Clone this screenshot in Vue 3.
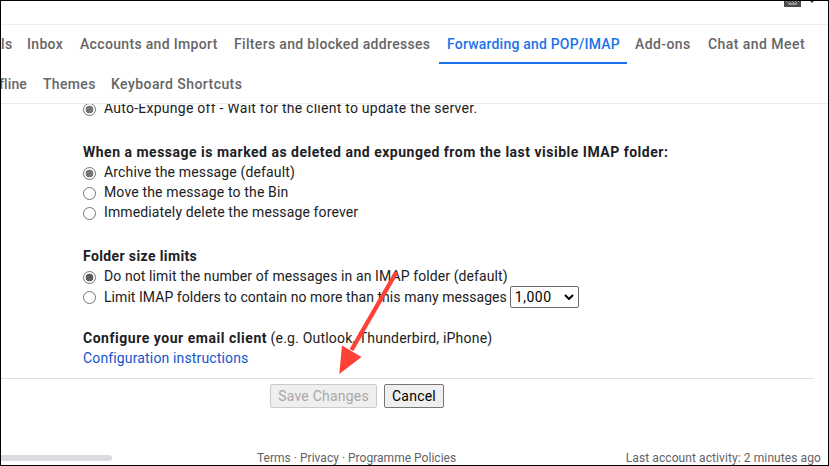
<template>
  <div class="page">
    <header class="toolbar">
      <svg class="keyboard" viewBox="0 0 17 6" width="17" height="6">
        <path d="M0 0h17v6H0z" fill="#4a4a4a" />
        <path d="M2 0h1v1H2zM5 0h1v1H5zM8 0h1v1H8zM11 0h1v1h-1zM14 0h1v1h-1zM3 1h1v1H3zM6 1h1v1H6zM9 1h1v1H9zM12 1h1v1h-1z" fill="#aaa" />
        <path d="M4 2.500h9v1H4z" fill="#ddd" />
      </svg>
      <svg class="caret" viewBox="0 0 4 2" width="4" height="2">
        <path d="M0 0h4L2 2z" fill="#444" />
      </svg>
    </header>

    <nav class="tabs">
      <div class="tab-row">
        <a v-for="tab in firstRow" :key="tab.id" class="tab" :class="[tab.id, { active: tab.id === activeTab }]" @click="activeTab = tab.id">{{ tab.label }}</a>
      </div>
      <div class="tab-row second">
        <a v-for="tab in secondRow" :key="tab.id" class="tab" :class="[tab.id, { active: tab.id === activeTab }]" @click="activeTab = tab.id">{{ tab.label }}</a>
      </div>
    </nav>

    <main class="settings">
      <section class="group expunge-mode">
        <label class="option"><input type="radio" checked disabled /><span class="t-wait">Auto-Expunge off - Wait for the client to update the server.</span></label>
      </section>

      <section class="group">
        <h3><span class="t-when">When a message is marked as deleted and expunged from the last visible IMAP folder:</span></h3>
        <label v-for="option in expungeOptions" :key="option.id" class="option">
          <input v-model="expungeAction" type="radio" name="expunge" :value="option.id" :class="{ muted: option.id === 'archive' }" /><span :class="'t-' + option.id">{{ option.label }}</span>
        </label>
      </section>

      <section class="group">
        <h3><span class="t-folder">Folder size limits</span></h3>
        <label class="option">
          <input v-model="limit" type="radio" name="limit" value="none" /><span class="t-none">Do not limit the number of messages in an IMAP folder (default)</span>
        </label>
        <div class="option tall">
          <input v-model="limit" type="radio" name="limit" value="max" /><span class="t-max">Limit IMAP folders to contain no more than this many messages</span>
          <div class="select">
            <span>1,000</span>
            <svg viewBox="0 0 10 6" width="10" height="6"><path d="M1 1l4 4 4-4" fill="none" stroke="#000" stroke-width="2" /></svg>
          </div>
        </div>
      </section>

      <section class="group configure">
        <p><b class="t-configure">Configure your email client</b> <span class="t-eg">(e.g. Outlook, Thunderbird, iPhone)</span></p>
        <p><a class="link">Configuration instructions</a></p>
      </section>
    </main>

    <div class="actions">
      <button class="save" disabled>Save Changes</button>
      <button class="cancel">Cancel</button>
    </div>

    <footer class="footer">
      <div class="storage"></div>
      <div class="terms">Terms · Privacy · Programme Policies</div>
      <div class="activity">Last account activity: 2 minutes ago</div>
    </footer>

    <svg class="arrow" viewBox="0 0 70 110" width="70" height="110">
      <path d="M66.5 2L21.500 80" stroke="#fe4136" stroke-width="4.4" fill="none" />
      <path d="M9.3 104l2.7-28.5L31.500 87z" fill="#fe4136" />
    </svg>
  </div>
</template>

<script setup>
import { ref } from 'vue';

const firstRow = [
  { id: 'labels', label: 'ls' },
  { id: 'inbox', label: 'Inbox' },
  { id: 'accounts', label: 'Accounts and Import' },
  { id: 'filters', label: 'Filters and blocked addresses' },
  { id: 'forwarding', label: 'Forwarding and POP/IMAP' },
  { id: 'addons', label: 'Add-ons' },
  { id: 'chat', label: 'Chat and Meet' },
];

const secondRow = [
  { id: 'offline', label: 'ffline' },
  { id: 'themes', label: 'Themes' },
  { id: 'shortcuts', label: 'Keyboard Shortcuts' },
];

const expungeOptions = [
  { id: 'archive', label: 'Archive the message (default)' },
  { id: 'bin', label: 'Move the message to the Bin' },
  { id: 'delete', label: 'Immediately delete the message forever' },
];

const activeTab = ref('forwarding');
const expungeAction = ref('archive');
const limit = ref('none');
</script>

<style scoped>
.page {
  position: relative;
  box-sizing: border-box;
  width: 829px;
  height: 466px;
  border: 1px solid #000;
  background: #fff;
  overflow: hidden;
  display: flex;
  flex-direction: column;
  font-family: Roboto, "Liberation Sans", sans-serif;
  font-size: 14px;
  color: #202124;
  white-space: nowrap;
}

.toolbar {
  flex: none;
  box-sizing: border-box;
  height: 24px;
  border-bottom: 1px solid #eee;
  padding-right: 14px;
  display: flex;
  justify-content: flex-end;
  align-items: flex-start;
  gap: 9px;
}

.tabs {
  flex: none;
  box-sizing: border-box;
  height: 79px;
  border-bottom: 1px solid #e8eaed;
}

.tab-row {
  display: flex;
  height: 39px;
}

.tab {
  box-sizing: border-box;
  flex: none;
  height: 39px;
  padding-left: 8px;
  line-height: 39px;
  font-weight: 500;
  letter-spacing: 0.33px;
  color: #666;
  cursor: pointer;
}

.tab-row.second .tab {
  line-height: 41px;
}

.tab.active {
  color: #1a73e8;
  border-bottom: 2px solid #1a73e8;
}

.labels { width: 18px; padding-left: 0; }
.inbox { width: 53px; }
.accounts { width: 154px; }
.filters { width: 213px; }
.forwarding { width: 188px; letter-spacing: 0.2px; }
.addons { width: 73px; letter-spacing: 0.42px; }
.chat { letter-spacing: 0.45px; }
.offline { width: 34px; padding-left: 0; text-indent: -7px; letter-spacing: 0.1px; }
.themes { width: 68px; }
.shortcuts { letter-spacing: 0.43px; }

.settings {
  flex: none;
  box-sizing: border-box;
  height: 275px;
  width: 813px;
  padding-left: 82px;
  border-bottom: 1px solid #e0e0e0;
  overflow: hidden;
}

.group {
  margin-bottom: 24px;
}

.expunge-mode {
  margin-top: -6px;
}

.configure {
  margin-top: -4px;
}

h3,
p {
  margin: 0;
  height: 20px;
  line-height: 20px;
  font-size: 14px;
}

.option {
  display: flex;
  align-items: center;
  height: 20px;
}

.option.tall {
  height: 22px;
}

.t-wait { letter-spacing: 0.25px; }
.t-when { letter-spacing: 0.5px; }
.t-archive { letter-spacing: 0.15px; }
.t-bin { letter-spacing: 0.15px; }
.t-delete { letter-spacing: 0.13px; }
.t-folder { letter-spacing: 0.38px; }
.t-none { letter-spacing: 0.1px; }
.t-max { letter-spacing: 0.055px; }
.t-configure { letter-spacing: 0.53px; }
.t-eg { letter-spacing: 0.2px; }

input {
  appearance: none;
  flex: none;
  box-sizing: border-box;
  width: 13px;
  height: 13px;
  margin: 3px 8px 0 0;
  border: 1px solid #767676;
  border-radius: 50%;
  background: #fff;
}

.tall input {
  margin-top: 1px;
}

input:checked {
  background: radial-gradient(circle, #5c5c5c 3.6px, #fff 4.2px);
}

input.muted:checked,
input:disabled {
  background: radial-gradient(circle, #767676 3.6px, #fff 4.2px);
}

.select {
  box-sizing: border-box;
  width: 69px;
  height: 22px;
  margin-left: 3px;
  padding: 0 4px;
  border: 1px solid #6b6b6b;
  border-radius: 2px;
  display: flex;
  align-items: center;
  justify-content: space-between;
  letter-spacing: 0.5px;
  color: #000;
}

.link {
  letter-spacing: 0.15px;
  color: #1155cc;
}

.actions {
  flex: none;
  display: flex;
  gap: 7px;
  padding: 5px 0 0 269px;
}

button {
  box-sizing: border-box;
  height: 24px;
  padding: 0;
  border: 1px solid #767676;
  border-radius: 2px;
  background: #efefef;
  font: inherit;
  letter-spacing: 0.22px;
  color: #000;
}

.save {
  width: 107px;
  border-color: #cbcbcb;
  color: #a8a8a8;
}

.cancel {
  width: 60px;
}

.footer {
  display: flex;
  align-items: center;
  margin-top: 42px;
  height: 15px;
  font-size: 12px;
  color: #5f6368;
}

.storage {
  width: 111px;
  height: 6px;
  margin-top: 1px;
  border-radius: 0 3px 3px 0;
  background: #dadce0;
}

.terms {
  margin-left: 145px;
  letter-spacing: 0.02px;
}

.activity {
  margin-left: auto;
  margin-right: 7px;
  letter-spacing: 0.09px;
}

.arrow {
  position: absolute;
  left: 329px;
  top: 269px;
}
</style>
